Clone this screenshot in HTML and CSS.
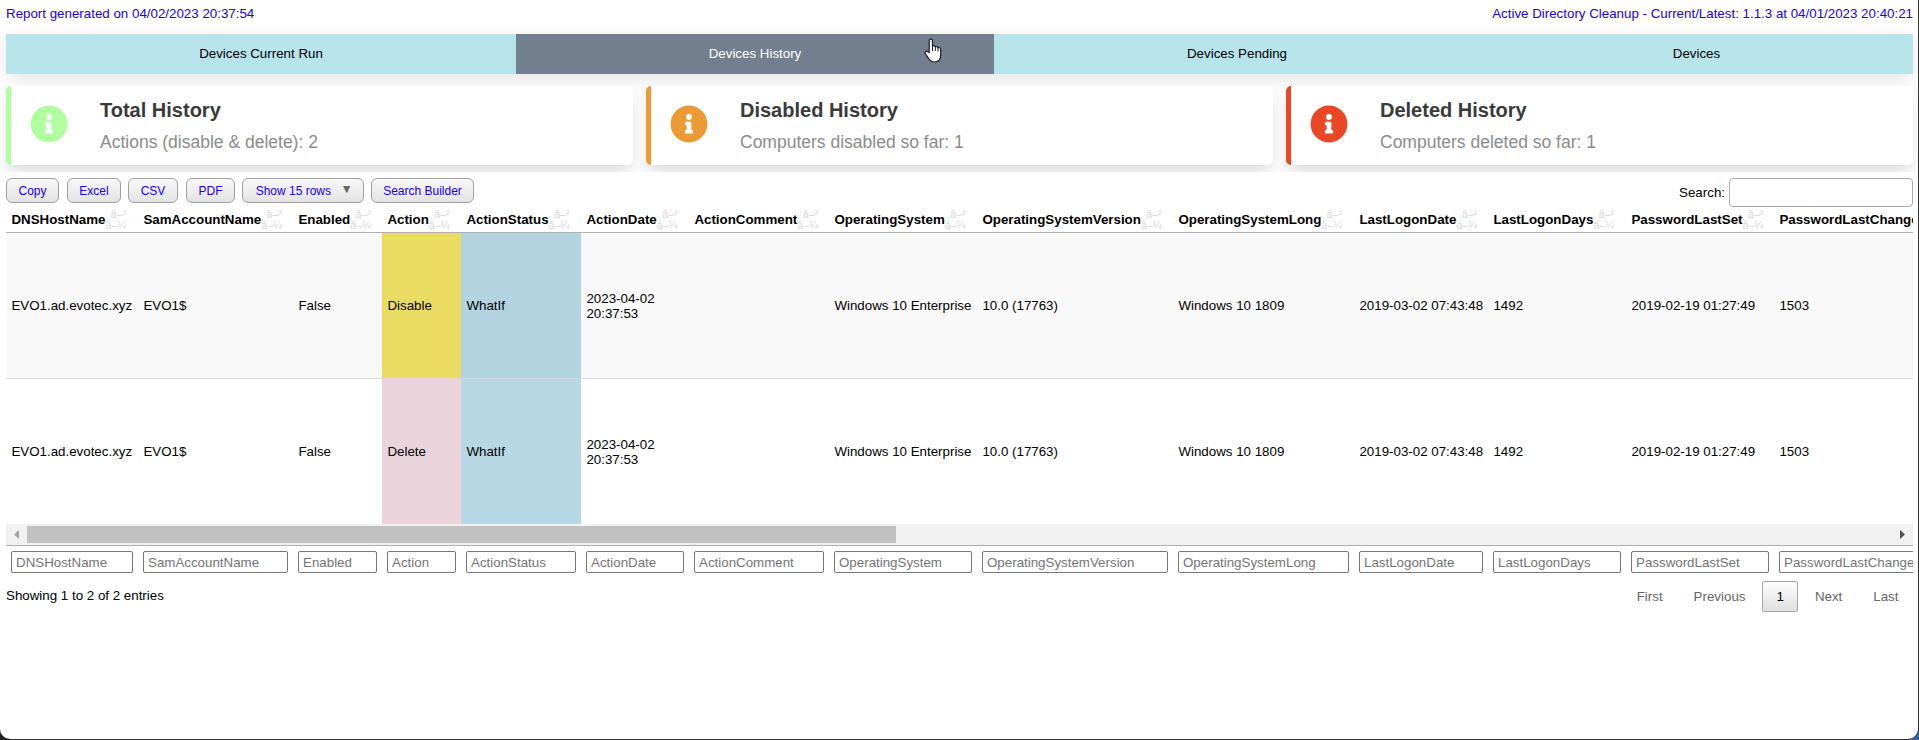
FILE: index.html
```html
<!DOCTYPE html>
<html lang="en">
<head>
<meta charset="utf-8">
<title>Active Directory Cleanup</title>
<link rel="stylesheet" href="styles.css">
</head>
<body>
<div class="page">
  <header class="top"><span>Report generated on 04/02/2023 20:37:54</span><span>Active Directory Cleanup - Current/Latest: 1.1.3 at 04/01/2023 20:40:21</span></header>
  <nav class="tabs">
    <div class="tab">Devices Current Run</div>
    <div class="tab active">Devices History</div>
    <div class="tab">Devices Pending</div>
    <div class="tab">Devices</div>
    <svg class="pointer" viewBox="0 0 18 25"><path d="M5.2 14.5V2.9c0-2.5 3.3-2.5 3.3 0v5.2c.8-.8 2.4-.5 2.8.7.9-.6 2.3-.2 2.6.9 1.2-.4 2.8.1 2.8 1.9v5.2c0 4.3-2.300 7.200-6.400 7.200-3 0-4.600-1.500-5.800-3.700L1.300 15.600c-1-1.900 1-3.100 2.300-1.900z"/><path class="finger" d="M8.500 8v5M11.300 9v4M14 10v3.500"/></svg>
  </nav>
  <section class="cards">
    <div class="card green"><svg class="info" viewBox="0 0 512 512"><use href="#info"/></svg><div><h3>Total History</h3><p>Actions (disable &amp; delete): 2</p></div></div>
    <div class="card orange"><svg class="info" viewBox="0 0 512 512"><use href="#info"/></svg><div><h3>Disabled History</h3><p>Computers disabled so far: 1</p></div></div>
    <div class="card red"><svg class="info" viewBox="0 0 512 512"><use href="#info"/></svg><div><h3>Deleted History</h3><p>Computers deleted so far: 1</p></div></div>
  </section>
  <section class="report">
    <div class="toolbar">
      <div class="buttons">
        <button class="w1">Copy</button><button class="w2">Excel</button><button class="w3">CSV</button><button class="w4">PDF</button><button class="w5">Show 15 rows<i>▼</i></button><button class="w6">Search Builder</button>
      </div>
      <label class="search">Search:<input type="text"></label>
    </div>
    <div class="grid head" id="head"></div>
    <div class="grid row odd">
      <div>EVO1.ad.evotec.xyz</div><div>EVO1$</div><div>False</div><div class="yellow">Disable</div><div class="blue">WhatIf</div><div class="date">2023-04-02 20:37:53</div><div></div><div>Windows 10 Enterprise</div><div>10.0 (17763)</div><div>Windows 10 1809</div><div>2019-03-02 07:43:48</div><div>1492</div><div>2019-02-19 01:27:49</div><div>1503</div>
    </div>
    <div class="grid row even">
      <div>EVO1.ad.evotec.xyz</div><div>EVO1$</div><div>False</div><div class="pink">Delete</div><div class="blue">WhatIf</div><div class="date">2023-04-02 20:37:53</div><div></div><div>Windows 10 Enterprise</div><div>10.0 (17763)</div><div>Windows 10 1809</div><div>2019-03-02 07:43:48</div><div>1492</div><div>2019-02-19 01:27:49</div><div>1503</div>
    </div>
    <div class="scroll">
      <svg viewBox="0 0 21 21"><path fill="#a3a3a3" d="M13 6v9l-5-4.500z"/></svg><div class="thumb"></div><svg class="right" viewBox="0 0 21 21"><path fill="#505050" d="M8 6v9l5-4.500z"/></svg>
    </div>
    <div class="grid filters" id="filters"></div>
    <div class="foot">
      <div class="summary">Showing 1 to 2 of 2 entries</div>
      <div class="pager"><span>First</span><span>Previous</span><span class="current">1</span><span>Next</span><span>Last</span></div>
    </div>
  </section>
</div>
<svg class="defs"><symbol id="info" viewBox="0 0 512 512"><path d="M256 8C119 8 8 119 8 256s111 248 248 248 248-111 248-248S393 8 256 8zm0 110c23.200 0 42 18.800 42 42s-18.800 42-42 42-42-18.800-42-42 18.800-42 42-42zm56 254c0 6.600-5.400 12-12 12h-88c-6.600 0-12-5.400-12-12v-24c0-6.600 5.400-12 12-12h12v-64h-12c-6.600 0-12-5.400-12-12v-24c0-6.600 5.400-12 12-12h64c6.600 0 12 5.400 12 12v100h12c6.600 0 12 5.400 12 12z"/></symbol></svg>
<script src="columns.js"></script>
</body>
</html>
```
FILE: styles.css
```css
* { box-sizing: border-box; }
html { background: #333; }
body { margin: 0; height: 740px; overflow: hidden; background: linear-gradient(90deg, #222 50%, #3a64a0 50%); font: 13.333px "Liberation Sans", Arial, sans-serif; color: #000; }
body::after { content: ""; position: absolute; left: 10px; right: 10px; top: 739px; height: 1px; background: #333; }
.page { width: 1918px; height: 739px; padding: 0 5px 0 6px; background: #fff; border-radius: 0 0 10px 10px; overflow: hidden; box-shadow: 1px 0 #333; }
.defs { display: none; }
.top { height: 34px; padding-top: 6px; line-height: 15px; display: flex; justify-content: space-between; color: #2000e8; }
.tabs { position: relative; display: grid; grid-template-columns: 510px 478px 486px 433px; height: 40px; background: #b7e4eb; box-shadow: 0 5px 20px rgba(0,0,0,.11); }
.tab { display: flex; align-items: center; justify-content: center; padding-bottom: 2px; }
.active { background: #737f8e; color: #fff; }
.pointer { position: absolute; left: 918px; top: 4px; width: 18px; height: 25px; }
.pointer path { fill: #fff; stroke: #1d1d2b; stroke-width: 1.2; }
.pointer .finger { fill: none; stroke-width: 1; }
.cards { display: grid; grid-template-columns: repeat(3, 627px); gap: 13px; height: 98px; padding-top: 12px; }
.card { position: relative; height: 79px; display: flex; align-items: center; background: #fff; border-left: 5px solid; border-radius: 5px; box-shadow: 0 8px 16px -2px rgba(0,0,0,.15); padding-left: 19px; }
.green { border-color: #afff9f; fill: #afff9f; }
.orange { border-color: #ec9a33; fill: #ec9a33; }
.red { border-color: #eb4625; fill: #eb4625; }
.info { width: 38px; height: 38px; margin-right: 32px; margin-top: -4px; }
.card h3 { margin: 0 0 10px; font-size: 20px; line-height: 22px; color: #3a3a3a; }
.card p { margin: 0; font-size: 17.5px; line-height: 22px; color: #8c8c8c; }
.report { position: relative; background: #fff; }
.toolbar { height: 35px; padding-top: 6px; display: flex; justify-content: space-between; }
.buttons { display: flex; }
button { height: 25px; padding: 0; margin-right: 8px; border: 1px solid #a0a0a0; border-radius: 6px; background: linear-gradient(#f8f8f8, #e3e3e3); color: #2000f0; font: 12px "Liberation Sans", Arial, sans-serif; }
button i { font: 9.500px "DejaVu Sans", sans-serif; color: #666; margin-left: 12px; position: relative; top: -3px; }
.w1 { width: 53px; } .w2 { width: 54px; margin-right: 7px; } .w3 { width: 50px; } .w4 { width: 49px; margin-right: 7px; } .w5 { width: 122px; margin-right: 7px; } .w6 { width: 103px; }
.search { display: flex; align-items: center; height: 29px; gap: 4px; }
.search input { width: 184px; height: 29px; border: 1px solid #aaa; border-radius: 4px; background: #fff; }
.grid { width: 1907px; overflow: hidden; display: grid; grid-template-columns: 132px 155px 89px 79px 120px 108px 140px 148px 196px 181px 134px 138px 148px 199px; }
.head { height: 26px; border-bottom: 1px solid #b0b0b0; font-weight: bold; }
.head .th { display: flex; align-items: center; justify-content: space-between; padding: 0 12px 0 5.400px; white-space: nowrap; }
.sort { display: flex; flex-direction: column; align-items: flex-end; font-size: 10.667px; line-height: 11px; font-weight: normal; color: #d8d8d8; }
.row { height: 145px; white-space: nowrap; }
.row > div { display: flex; align-items: center; padding: 0 5px 0 5.400px; line-height: 15px; }
.row .date { white-space: normal; padding-right: 25px; }
.odd { height: 146px; background: #f9f9f9; border-bottom: 1px solid #d8d8d8; }
.yellow { background: #eadb62; }
.pink { background: #ead3db; }
.blue { background: #b6d7e3; }
.odd .blue { background: #b2d3df; }
.scroll { height: 22px; display: flex; align-items: flex-start; background: #f1f1f1; border-bottom: 1px solid #b0b0b0; }
.scroll svg { width: 21px; height: 21px; }
.scroll .right { margin-left: auto; }
.thumb { width: 869px; height: 17px; margin-top: 2px; background: #c1c1c1; }
.filters { height: 31px; padding-top: 5px; }
.filters div { padding: 0 5px; }
.filters input { display: block; width: 100%; height: 22px; padding: 0 4px; border: 1px solid #767676; border-radius: 2px; font: 13.333px "Liberation Sans", Arial, sans-serif; background: #fff; }
.filters input::placeholder { color: #757575; }
.foot { display: flex; justify-content: space-between; padding-top: 4px; }
.summary { line-height: 15px; padding-top: 7px; }
.pager { display: flex; gap: 2px; color: #666; }
.pager span { height: 31px; line-height: 29px; padding: 0 13.500px; border: 1px solid transparent; border-radius: 2px; }
.pager .current { color: #000; border-color: #a8a8a8; background: linear-gradient(#fdfdfd, #dfdfdf); }
```
FILE: columns.js
```js
const columns = ["DNSHostName", "SamAccountName", "Enabled", "Action", "ActionStatus", "ActionDate", "ActionComment", "OperatingSystem", "OperatingSystemVersion", "OperatingSystemLong", "LastLogonDate", "LastLogonDays", "PasswordLastSet", "PasswordLastChangedDays"];
// The last column runs past the right edge, so its sort marks are left out.
const sort = '<span class="sort"><span>â–²</span><span>â–¼</span></span>';
document.getElementById("head").innerHTML = columns.map((c, i) => `<div class="th">${c}${i < columns.length - 1 ? sort : ""}</div>`).join("");
document.getElementById("filters").innerHTML = columns.map(c => `<div><input placeholder="${c}"></div>`).join("");
```
